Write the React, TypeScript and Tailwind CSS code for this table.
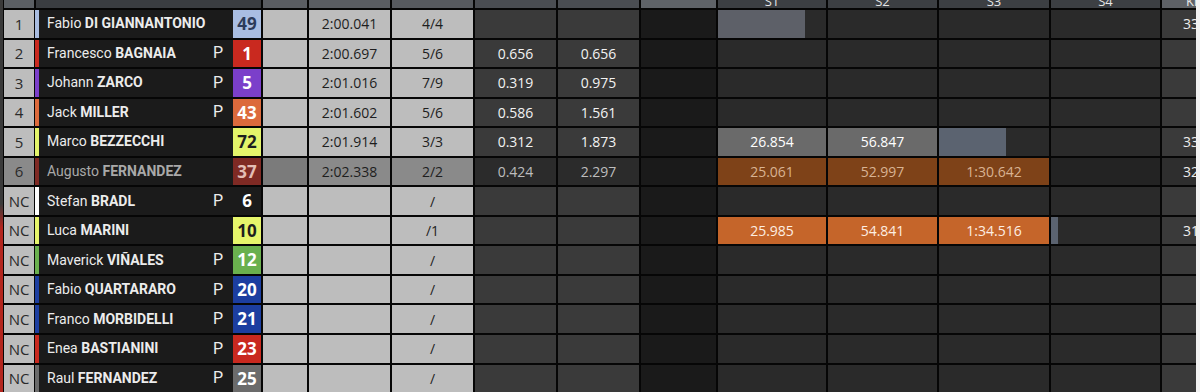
type Sector = { text?: string; cls?: string; bar?: number; barCls?: string };

interface Row {
  pos: string;
  first: string;
  last: string;
  p: boolean;
  num: string;
  stripe: string;
  badge: string;
  time: string;
  laps: string;
  gap: string;
  int: string;
  sectors: Sector[];
  km: string;
  dim?: boolean;
}

const empty: Sector[] = [{}, {}, {}, {}];

const rows: Row[] = [
  { pos: '1', first: 'Fabio', last: 'DI GIANNANTONIO', p: false, num: '49', stripe: 'bg-[#a8bce0]', badge: 'bg-[#a9bde2] text-[#2d3b5a]', time: '2:00.041', laps: '4/4', gap: '', int: '', sectors: [{ bar: 87, barCls: 'bg-[#5d6068]' }, {}, {}, {}], km: '33' },
  { pos: '2', first: 'Francesco', last: 'BAGNAIA', p: true, num: '1', stripe: 'bg-[#c9291f]', badge: 'bg-[#c9291f] text-white', time: '2:00.697', laps: '5/6', gap: '0.656', int: '0.656', sectors: empty, km: '' },
  { pos: '3', first: 'Johann', last: 'ZARCO', p: true, num: '5', stripe: 'bg-[#7b3fca]', badge: 'bg-[#7b3fca] text-white', time: '2:01.016', laps: '7/9', gap: '0.319', int: '0.975', sectors: empty, km: '' },
  { pos: '4', first: 'Jack', last: 'MILLER', p: true, num: '43', stripe: 'bg-[#dc6a3c]', badge: 'bg-[#dc6a3c] text-white', time: '2:01.602', laps: '5/6', gap: '0.586', int: '1.561', sectors: empty, km: '' },
  { pos: '5', first: 'Marco', last: 'BEZZECCHI', p: false, num: '72', stripe: 'bg-[#e4f46a]', badge: 'bg-[#e4f46a] text-[#1e1e1e]', time: '2:01.914', laps: '3/3', gap: '0.312', int: '1.873', sectors: [{ text: '26.854', cls: 'bg-[#6a6a6a] text-white' }, { text: '56.847', cls: 'bg-[#6a6a6a] text-white' }, { bar: 67, barCls: 'bg-[#5b6370]' }, {}], km: '33' },
  { pos: '6', first: 'Augusto', last: 'FERNANDEZ', p: false, num: '37', stripe: 'bg-[#7f2a24]', badge: 'bg-[#7f2a24] text-[#e3bdb5]', time: '2:02.338', laps: '2/2', gap: '0.424', int: '2.297', sectors: [{ text: '25.061', cls: 'bg-[#7e4218] text-[#d9b392]' }, { text: '52.997', cls: 'bg-[#7e4218] text-[#d9b392]' }, { text: '1:30.642', cls: 'bg-[#7e4218] text-[#d9b392]' }, { cls: 'bg-[#232323]' }], km: '32', dim: true },
  { pos: 'NC', first: 'Stefan', last: 'BRADL', p: true, num: '6', stripe: 'bg-white', badge: 'bg-[#1b1b1b] text-white', time: '', laps: '/', gap: '', int: '', sectors: empty, km: '' },
  { pos: 'NC', first: 'Luca', last: 'MARINI', p: false, num: '10', stripe: 'bg-[#e6f56b]', badge: 'bg-[#e6f56b] text-[#1e1e1e]', time: '', laps: '/1', gap: '', int: '', sectors: [{ text: '25.985', cls: 'bg-[#c5652a] text-[#fdeee2]' }, { text: '54.841', cls: 'bg-[#c5652a] text-[#fdeee2]' }, { text: '1:34.516', cls: 'bg-[#c5652a] text-[#fdeee2]' }, { bar: 7, barCls: 'bg-[#5b6370]' }], km: '31' },
  { pos: 'NC', first: 'Maverick', last: 'VIÑALES', p: true, num: '12', stripe: 'bg-[#6ab04e]', badge: 'bg-[#6ab04e] text-white', time: '', laps: '/', gap: '', int: '', sectors: empty, km: '' },
  { pos: 'NC', first: 'Fabio', last: 'QUARTARARO', p: true, num: '20', stripe: 'bg-[#1c3ea0]', badge: 'bg-[#1c3ea0] text-white', time: '', laps: '/', gap: '', int: '', sectors: empty, km: '' },
  { pos: 'NC', first: 'Franco', last: 'MORBIDELLI', p: true, num: '21', stripe: 'bg-[#1c3ea0]', badge: 'bg-[#1c3ea0] text-white', time: '', laps: '/', gap: '', int: '', sectors: empty, km: '' },
  { pos: 'NC', first: 'Enea', last: 'BASTIANINI', p: true, num: '23', stripe: 'bg-[#c9291f]', badge: 'bg-[#c9291f] text-white', time: '', laps: '/', gap: '', int: '', sectors: empty, km: '' },
  { pos: 'NC', first: 'Raul', last: 'FERNANDEZ', p: true, num: '25', stripe: 'bg-[#6b6b6b]', badge: 'bg-[#6b6b6b] text-white', time: '', laps: '/', gap: '', int: '', sectors: empty, km: '' },
];

const sectorWidths = ['w-[108px]', 'w-[109px]', 'w-[110px]', 'w-[109px]'];

// header row is cut off at the top of the screenshot, only the lower part of the labels shows
function Header() {
  return (
    <div className="flex h-[8px] gap-[2px] overflow-hidden">
      <div className="flex">
        <div className="w-[30px] bg-[#5b5f64]" />
        <div className="ml-[2px] w-[225px] bg-[#3a3d41]" />
      </div>
      <div className="w-[44px] bg-[#5a5d62]" />
      <div className="w-[81px] bg-[#5a5d62]" />
      <div className="w-[81px] bg-[#575a5f]" />
      <div className="w-[81px] bg-[#4a4d52]" />
      <div className="w-[81px] bg-[#4a4d52]" />
      <div className="w-[75px] bg-[#5f6368]" />
      {['S1', 'S2', 'S3', 'S4'].map((s, i) => (
        <div key={s} className={`${sectorWidths[i]} bg-[#3c3f43]`}>
          <div className="-mt-[6px] text-center text-[13px] leading-[14px] text-[#e6e6e6]">{s}</div>
        </div>
      ))}
      <div className="w-[34px] overflow-hidden whitespace-nowrap bg-[#5e6166] pl-[24px]">
        <div className="-mt-[6px] text-[13px] leading-[14px] text-[#e6e6e6]">Km/h</div>
      </div>
    </div>
  );
}

function SectorCell({ s, w, dim }: { s: Sector; w: string; dim?: boolean }) {
  const base = s.cls ?? (dim ? 'bg-[#232323]' : 'bg-[#2a2a2a]');
  return (
    <div className={`${w} ${base} flex items-center justify-center`}>
      {s.bar ? (
        <div className="flex h-full w-full">
          <div className={`h-full ${s.barCls}`} style={{ width: s.bar }} />
        </div>
      ) : (
        s.text
      )}
    </div>
  );
}

function TimingRow({ r }: { r: Row }) {
  const light = r.dim ? 'bg-[#8a8a8a]' : 'bg-[#bdbdbd]';
  const darkCell = r.dim ? 'bg-[#2b2b2b] text-[#bdbdbd]' : 'bg-[#3a3a3a] text-[#f2f2f2]';
  return (
    <div className="flex h-[27.6px] gap-[2px] text-[14px]">
      <div className="flex">
        <div className={`flex w-[30px] items-center justify-center text-[15px] text-[#2a2a2a] ${light}`}>{r.pos}</div>
        <div className={`ml-px w-[4px] ${r.stripe}`} />
        <div
          className={`flex w-[194px] items-center whitespace-nowrap bg-[#1b1b1b] pl-[8px] pr-[10px] text-[14px] ${r.dim ? 'text-[#a9a9a9]' : 'text-[#ececec]'}`}
          style={{ fontFamily: 'Roboto, "Open Sans", sans-serif' }}
        >
          <span>{r.first}&nbsp;</span>
          <span className="font-bold">{r.last}</span>
          {r.p && <span className="ml-auto text-[16px] text-[#ececec]">P</span>}
        </div>
        <div className={`flex w-[28px] items-center justify-center text-[17px] font-bold ${r.badge}`}>{r.num}</div>
      </div>
      <div className={`w-[44px] ${r.dim ? 'bg-[#7b7b7b]' : 'bg-[#bdbdbd]'}`} />
      <div className={`flex w-[81px] items-center justify-center text-[#1e1e1e] ${light}`}>{r.time}</div>
      <div className={`flex w-[81px] items-center justify-center text-[#1e1e1e] ${light}`}>{r.laps}</div>
      <div className={`flex w-[81px] items-center justify-center ${darkCell}`}>{r.gap}</div>
      <div className={`flex w-[81px] items-center justify-center ${darkCell}`}>{r.int}</div>
      <div className="w-[75px] bg-[#1a1a1a]" />
      {r.sectors.map((s, i) => (
        <SectorCell key={i} s={s} w={sectorWidths[i]} dim={r.dim} />
      ))}
      <div className={`flex w-[34px] items-center overflow-hidden whitespace-nowrap pl-[21px] text-[#ececec] ${r.dim ? 'bg-[#2e2e2e]' : 'bg-[#3a3a3a]'}`}>
        {r.km}
      </div>
    </div>
  );
}

export default function App() {
  return (
    <div
      className="flex h-[392px] w-[1200px] overflow-hidden bg-[#060606]"
      style={{ fontFamily: '"Open Sans", "Noto Sans", sans-serif' }}
    >
      <div className="w-[3px] bg-[linear-gradient(to_bottom,#3a3a3a_0%,#3a3a3a_52%,#b3261e_58%,#b3261e_100%)]" />
      <div className="ml-px flex w-[1192px] flex-col gap-[2px]">
        <Header />
        {rows.map((r, i) => (
          <TimingRow key={i} r={r} />
        ))}
      </div>
      <div className="ml-auto w-[4px] bg-[#f2f2f2]" />
    </div>
  );
}
